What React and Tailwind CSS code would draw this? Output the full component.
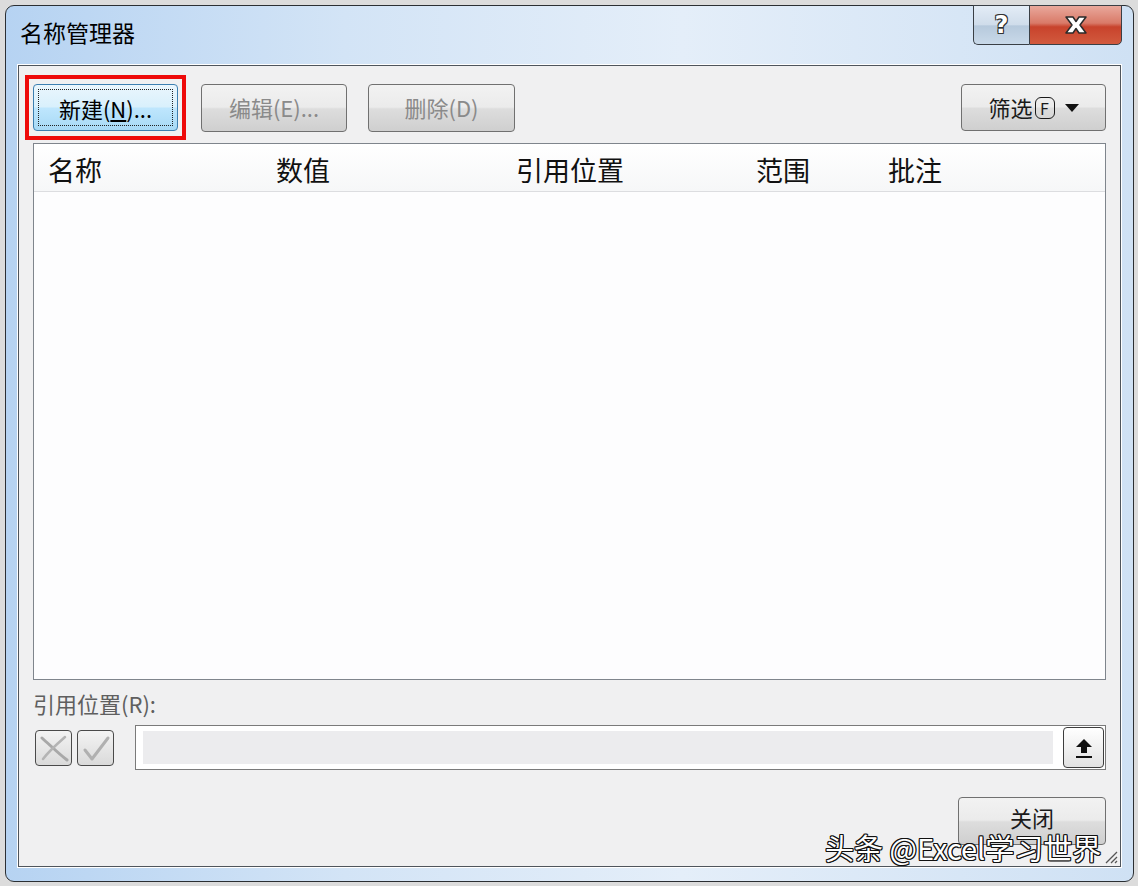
import React from 'react';

const cjk = "font-['Noto_Sans_CJK_SC','Noto_Sans',sans-serif]";

const GrayButton = ({ children, className = '', disabled }) => (
  <div
    className={`flex items-center justify-center rounded-[4px] border border-[#707070] bg-[linear-gradient(#f2f2f2_0%,#ebebeb_48%,#dddddd_52%,#cfcfcf_100%)] ${disabled ? 'text-[#8a8a8a]' : 'text-[#1a1a1a]'} ${className}`}
  >
    {children}
  </div>
);

export default function App() {
  return (
    <div className={`w-[1138px] h-[886px] bg-[#dcdcdc] pt-[5px] pl-[5px] overflow-hidden ${cjk}`}>
      <div className="relative w-[1129px] h-[877px] rounded-[9px] border border-[#2b2f33] bg-[linear-gradient(90deg,#b6d3f2_0%,#d3e4f6_30%,#e4eef9_60%,#cfe1f4_100%)] flex flex-col px-[12px] pb-[14px]">
        {/* Title bar */}
        <div className="h-[59px] flex items-start justify-between">
          <div className="pt-[15px] pl-[2px] text-[23px] text-black leading-none">名称管理器</div>
          <div className="flex mr-[-1px] mt-[-1px]">
            <div className="w-[56px] h-[40px] rounded-bl-[5px] border border-[#3a3f45] border-r-0 bg-[linear-gradient(#e3ecf6_0%,#cfdcea_50%,#b6c9dc_52%,#c9d9e9_100%)] flex items-center justify-center">
              <span className="text-[24px] font-bold text-white leading-none font-['DejaVu_Sans',sans-serif] [text-shadow:0_0_1px_#222,1px_1px_0_#333,-1px_-1px_0_#333,1px_-1px_0_#333,-1px_1px_0_#333]">?</span>
            </div>
            <div className="w-[93px] h-[40px] rounded-br-[5px] border border-[#3a3f45] bg-[linear-gradient(#e9a89c_0%,#d97a68_45%,#c8432c_55%,#d25a3e_100%)] flex items-center justify-center">
              <svg width="30" height="22" viewBox="0 0 30 22">
                <path d="M5 3 L12 3 L15 7.5 L18 3 L25 3 L19 11 L25 19 L18 19 L15 14.5 L12 19 L5 19 L11 11 Z" fill="#fff" stroke="#2a2a2a" strokeWidth="1.5" strokeLinejoin="round" />
              </svg>
            </div>
          </div>
        </div>

        {/* Client area */}
        <div className="relative flex-1 border border-[#4f555c] bg-[#f0f0f1] shadow-[0_0_0_1px_#ffffff] flex flex-col pl-[14px] pr-[14px] pt-[17px]">
          {/* toolbar */}
          <div className="flex items-center h-[49px]">
            <div className="relative">
              <div className="absolute -inset-x-[8px] -top-[9px] -bottom-[9px] border-[4px] border-[#ee0a0a]" />
              <div className="w-[145px] h-[47px] rounded-[4px] border border-[#3c7fb1] bg-[linear-gradient(#eaf6fd_0%,#d9f0fc_48%,#bee6fd_52%,#a7d9f5_100%)] p-[4px]">
                <div className="w-full h-full border border-dotted border-[#222] flex items-center justify-center text-[22px] text-black leading-none">
                  新建(<span className="underline underline-offset-2">N</span>)...
                </div>
              </div>
            </div>
            <GrayButton disabled className="ml-[23px] w-[146px] h-[48px] text-[22px]">编辑(E)...</GrayButton>
            <GrayButton disabled className="ml-[21px] w-[147px] h-[48px] text-[22px]">删除(D)</GrayButton>
            <div className="flex-1" />
            <GrayButton className="w-[145px] h-[47px] text-[22px] gap-[10px]">
              <span className="flex items-center">筛选<span className="inline-flex items-center justify-center w-[20px] h-[22px] ml-[2px] border-[1.5px] border-[#1a1a1a] rounded-[6px] text-[16px] leading-none">F</span></span>
              <svg width="14" height="8" viewBox="0 0 14 8"><path d="M0 0 L14 0 L7 8 Z" fill="#111" /></svg>
            </GrayButton>
          </div>

          {/* list */}
          <div className="mt-[11px] h-[537px] border border-[#7f858c] bg-[#fdfdfe] flex flex-col">
            <div className="h-[48px] grid grid-cols-[228px_240px_240px_132px_1fr] items-center pl-[14px] pt-[4px] text-[27px] text-[#111] leading-none border-b border-[#dcdde0] bg-[linear-gradient(#ffffff,#f6f7f8)]">
              <span>名称</span>
              <span>数值</span>
              <span>引用位置</span>
              <span>范围</span>
              <span>批注</span>
            </div>
            <div className="flex-1" />
          </div>

          {/* refers to */}
          <div className="mt-[12px] text-[22px] text-[#5f5f5f] leading-none">引用位置(R):</div>
          <div className="mt-[11px] flex items-center">
            <div className="flex gap-[5px] ml-[2px]">
              <div className="w-[37px] h-[36px] rounded-[4px] border border-[#4a4a4a] bg-[linear-gradient(#f3f3f3,#dadada)] flex items-center justify-center">
                <svg width="30" height="28" viewBox="0 0 30 28">
                  <path d="M3 4 C12 12 20 20 28 26" stroke="#a8a8a8" strokeWidth="3" fill="none" strokeLinecap="round" />
                  <path d="M26 3 C18 10 10 17 4 25" stroke="#b4b4b4" strokeWidth="2.5" fill="none" strokeLinecap="round" />
                </svg>
              </div>
              <div className="w-[37px] h-[36px] rounded-[4px] border border-[#4a4a4a] bg-[linear-gradient(#f3f3f3,#dadada)] flex items-center justify-center">
                <svg width="30" height="28" viewBox="0 0 30 28">
                  <path d="M4 16 L11 25 L27 4" stroke="#b0b0b0" strokeWidth="3" fill="none" strokeLinecap="round" strokeLinejoin="round" />
                </svg>
              </div>
            </div>
            <div className="ml-[21px] flex-1 h-[45px] border border-[#7a7a7a] bg-white flex items-center pl-[7px] pr-[1px]">
              <div className="flex-1 h-[33px] bg-[#ececee]" />
              <div className="ml-[10px] w-[41px] h-[41px] rounded-[4px] border border-[#3d3d3d] bg-[linear-gradient(#ffffff,#e2e2e2)] flex items-center justify-center">
                <svg width="20" height="22" viewBox="0 0 20 22">
                  <path d="M10 2 L18 10 L13 10 L13 16 L7 16 L7 10 L2 10 Z" fill="#111" />
                  <rect x="2" y="19" width="16" height="2" fill="#111" />
                </svg>
              </div>
            </div>
          </div>

          {/* close */}
          <div className="mt-[27px] flex justify-end">
            <GrayButton className="w-[148px] h-[48px] text-[22px] items-end pb-[10px]">关闭</GrayButton>
          </div>

          {/* resize grip */}
          <svg className="absolute right-[2px] bottom-[2px]" width="16" height="16" viewBox="0 0 16 16">
            <path d="M15 4 L4 15 M15 9 L9 15 M15 13 L13 15" stroke="#555" strokeWidth="1.3" />
          </svg>

          {/* watermark */}
          <div className="absolute left-[806px] bottom-[4px] text-[29px] leading-none text-white font-['Noto_Sans_CJK_SC','Liberation_Sans',sans-serif] [text-shadow:1px_1px_0_#111,-1px_-1px_0_#111,1px_-1px_0_#111,-1px_1px_0_#111,0_1px_0_#111,0_-1px_0_#111,1px_0_0_#111,-1px_0_0_#111]">
            头条 @Excel学习世界
          </div>
        </div>
      </div>
    </div>
  );
}
